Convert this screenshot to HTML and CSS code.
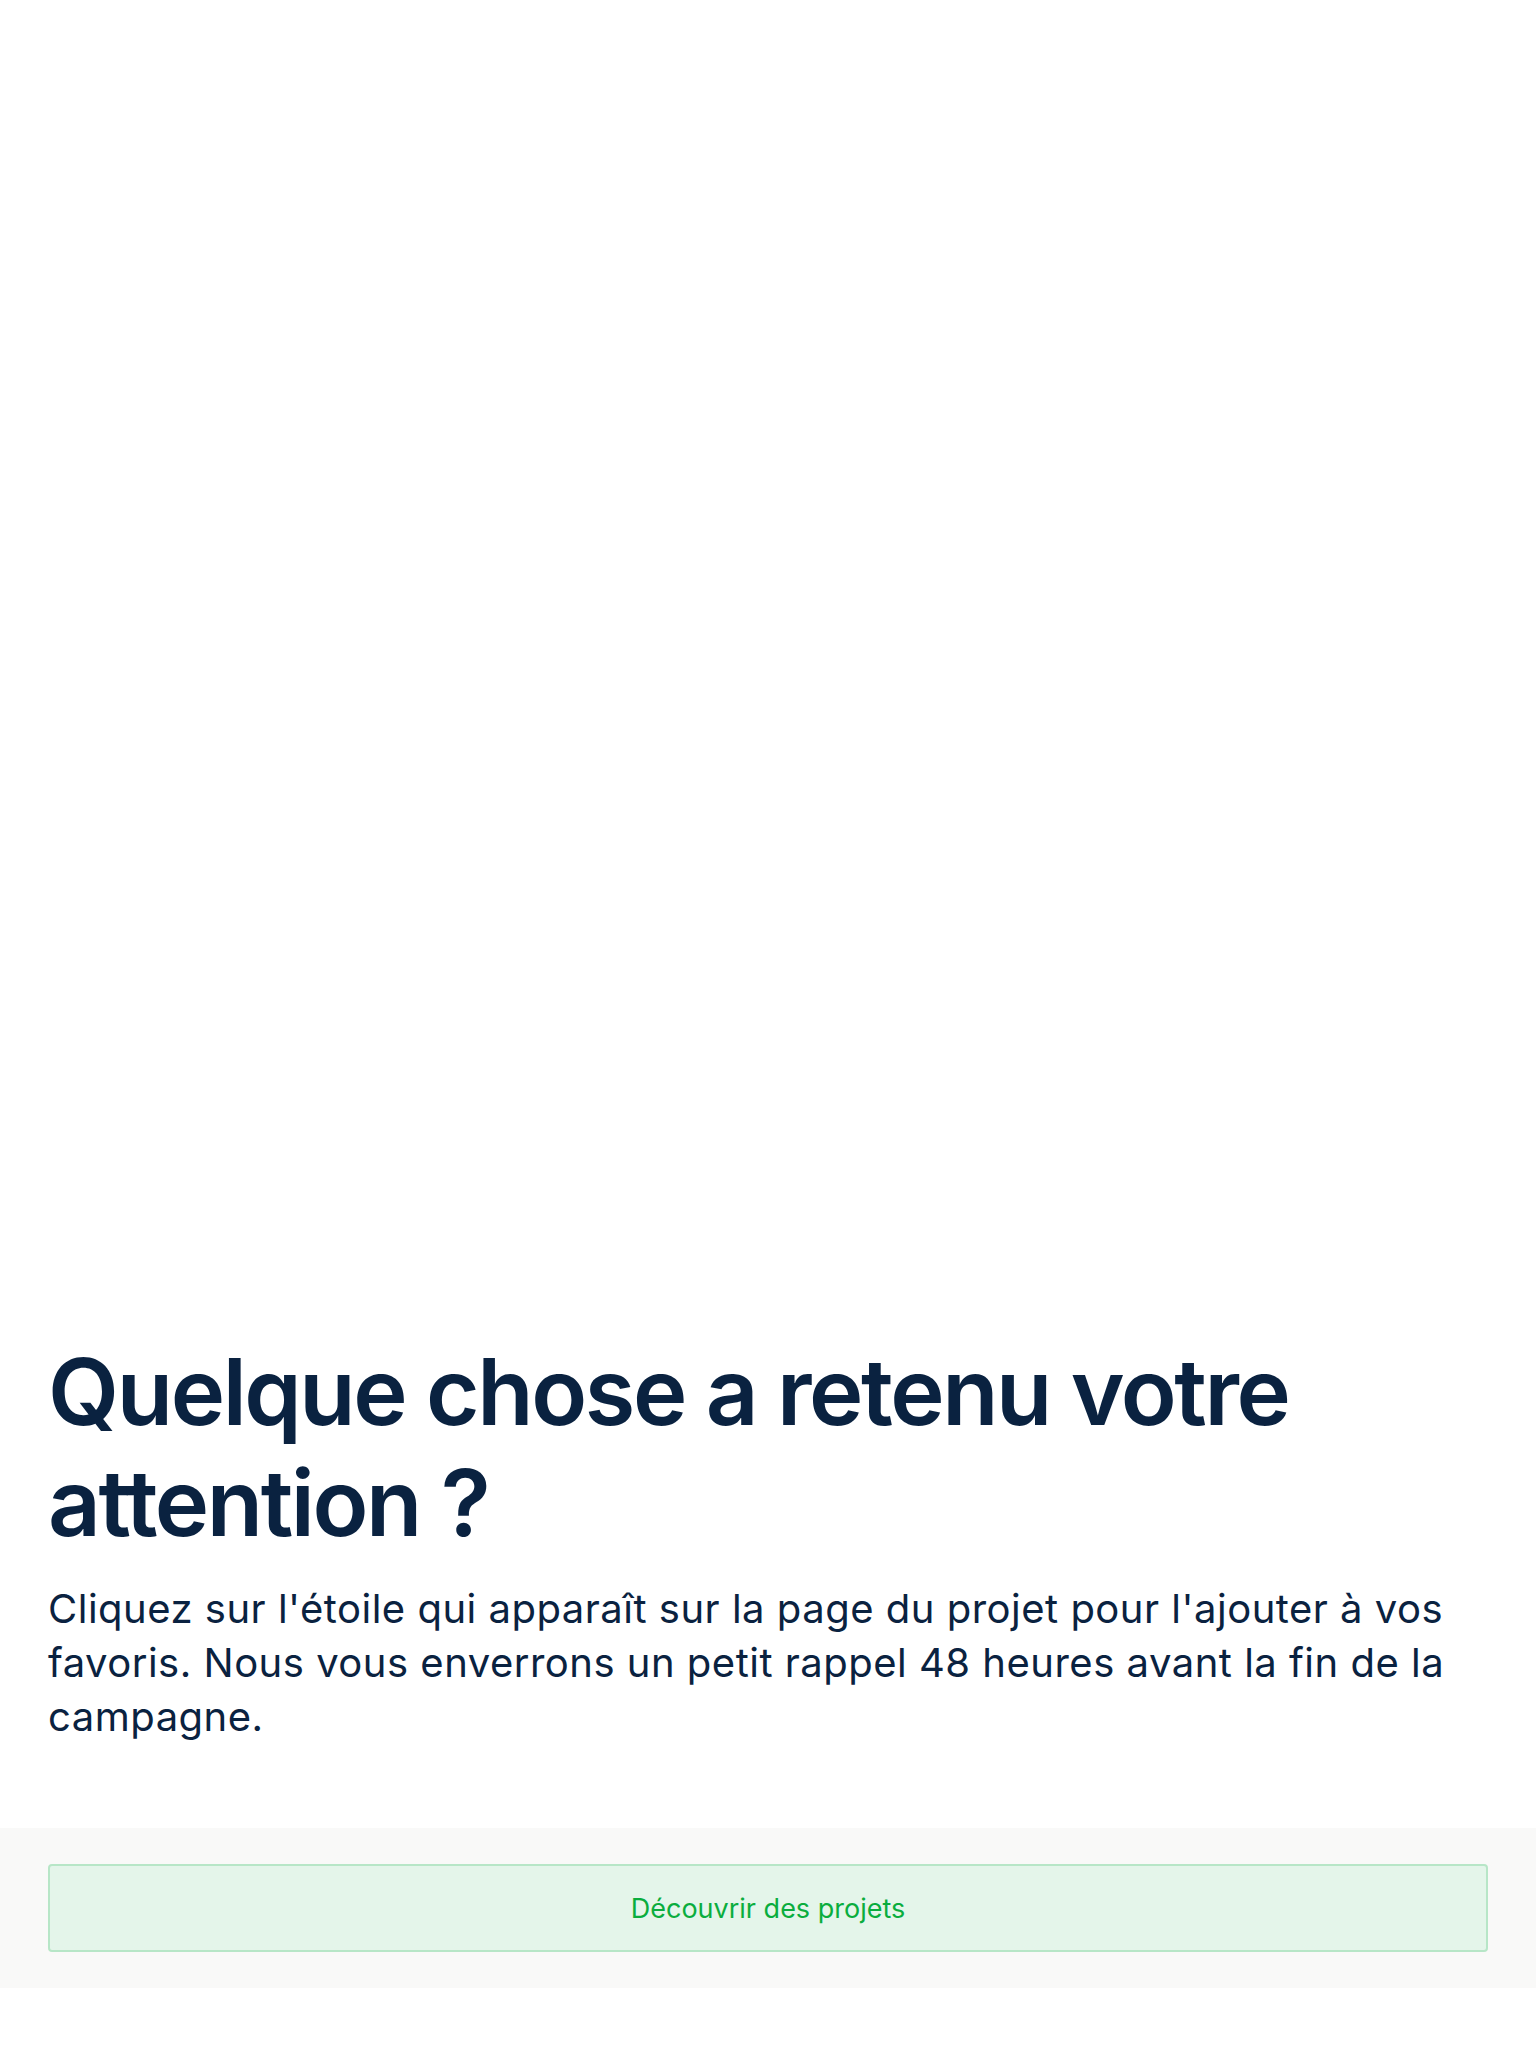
FILE: index.html
```html
<!DOCTYPE html>
<html lang="fr">
<head>
<meta charset="utf-8">
<title>Favoris</title>
<link rel="stylesheet" href="styles.css">
</head>
<body>
<main class="page">
  <div class="hero-space"></div>
  <section class="intro">
    <h1 class="title">Quelque chose a retenu votre attention ?</h1>
    <p class="lead">Cliquez sur l'étoile qui apparaît sur la page du projet pour l'ajouter à vos favoris. Nous vous enverrons un petit rappel 48 heures avant la fin de la campagne.</p>
  </section>
  <footer class="actions">
    <a class="btn" href="#">Découvrir des projets</a>
  </footer>
</main>
</body>
</html>
```
FILE: styles.css
```css
* { box-sizing: border-box; }
html, body { margin: 0; padding: 0; background: #ffffff; }
body {
  font-family: Inter, "Noto Sans", "Liberation Sans", sans-serif;
  color: #0a2240;
  min-height: 2048px;
}
.page { display: flex; flex-direction: column; }
.hero-space { height: 1336px; }
.intro { padding: 0 48px; }
.title {
  margin: 0;
  font-size: 92px;
  line-height: 111px;
  font-weight: 600;
  letter-spacing: -2.4px;
}
.lead {
  margin: 24px 0 0;
  font-size: 40px;
  line-height: 54px;
  font-weight: 400;
  letter-spacing: 0.5px;
}
.actions {
  margin-top: 84px;
  background: #f9f9f8;
  padding: 36px 48px;
}
.btn {
  display: flex;
  align-items: center;
  justify-content: center;
  height: 88px;
  border: 2px solid #b7e6c7;
  border-radius: 4px;
  background: #e4f5ea;
  color: #0aad3e;
  font-size: 27px;
  text-decoration: none;
}
```
